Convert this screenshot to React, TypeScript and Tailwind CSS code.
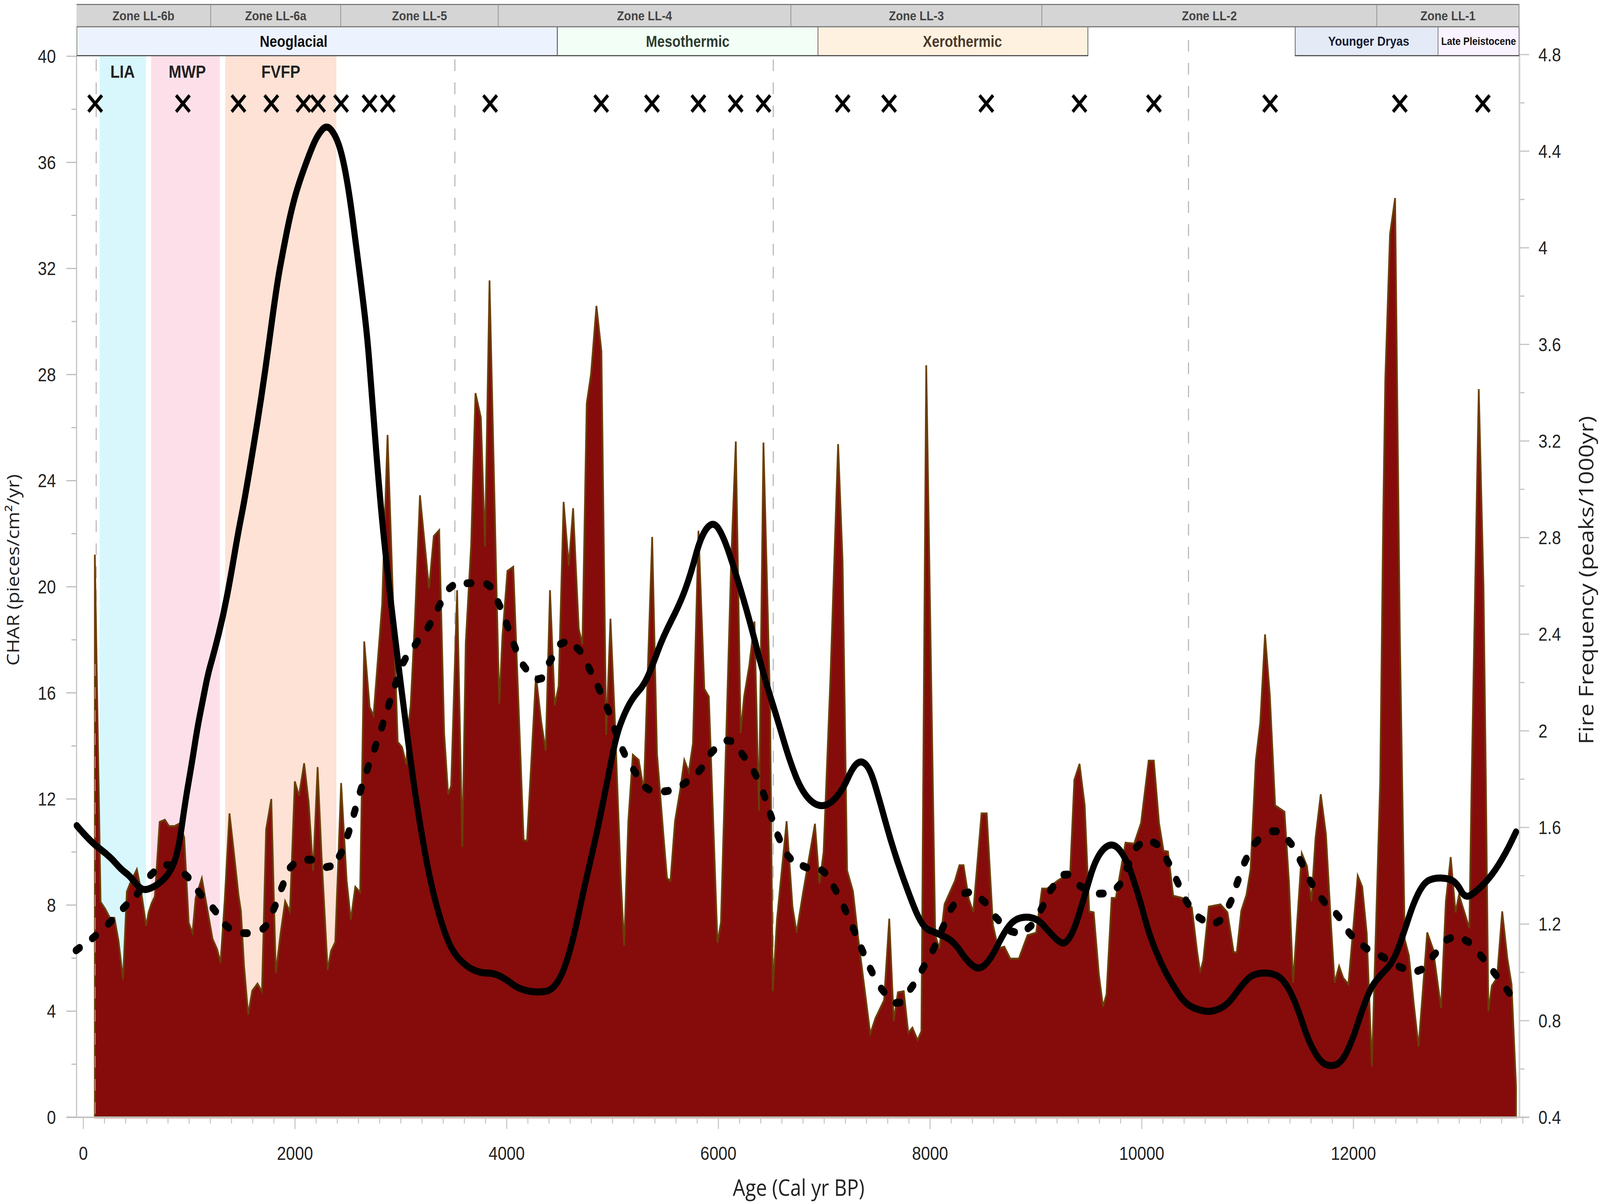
const crop = (x0: number, y0: number, w: number, h: number, pts: number[][]) =>
    pts.map(([x, y]) => [x0 + (x * w) / 1568, y0 + (y * h) / 1568])

// charcoal accumulation outline, read off in stretches, left to right
const charcoal = [
    [280, 2860],
    [280, 1420],
    ...crop(0, 1800, 1600, 1282, [
        [291, 622], [305, 645], [318, 672], [331, 672], [343, 745], [356, 865], [367, 590], [378, 560], [396, 520], [407, 580],
        [423, 697], [430, 655], [438, 628], [448, 605], [462, 372], [477, 365], [489, 385], [505, 385], [519, 377], [533, 420],
        [546, 688], [557, 720], [566, 610], [584, 548], [615, 738], [628, 770], [638, 812], [650, 620], [664, 345], [675, 450],
        [690, 600], [697, 650], [706, 820], [718, 975], [730, 900], [745, 878], [758, 903], [770, 395], [785, 300], [798, 845],
        [812, 720], [825, 620], [839, 652], [853, 245], [865, 290], [880, 188], [893, 310], [906, 525], [919, 200], [930, 470],
        [948, 835], [958, 775], [970, 748], [987, 250], [1003, 555], [1015, 678], [1028, 575], [1042, 592],
    ]),
    ...crop(900, 600, 1000, 1400, [
        [275, 1167], [300, 1355], [318, 1380], [358, 1060], [383, 575], [430, 1455], [450, 1470], [470, 1520], [478, 1420],
        [490, 1350], [510, 1100], [533, 748], [575, 1015], [597, 865], [622, 848], [645, 1430],
    ]),
    [1323, 2033], [1332, 2011],
    ...crop(900, 600, 1000, 1400, [[705, 1020]]),
    [1365, 2168],
    ...crop(900, 600, 1000, 1400, [
        [745, 1170], [770, 890], [790, 455], [815, 525], [834, 895], [855, 132], [885, 950], [900, 1345], [915, 1150], [938, 965],
        [965, 953],
    ]),
    [1546, 2150], [1556, 2153],
    ...crop(900, 600, 1000, 1400, [
        [1070, 1265], [1095, 1400], [1115, 1480], [1135, 1020], [1157, 1350], [1175, 1295], [1198, 767], [1222, 950], [1242, 785],
        [1268, 1130], [1285, 1175], [1305, 485], [1325, 400], [1350, 205], [1373, 335], [1395, 1435], [1415, 1102],
    ]),
    ...crop(1600, 1000, 1600, 2082, [
        [212, 650], [228, 940], [238, 1070], [250, 830], [263, 702], [280, 712], [295, 770], [319, 282], [333, 700], [352, 860],
        [362, 940], [372, 945], [385, 830], [400, 770], [412, 712], [425, 735], [437, 680], [453, 270], [470, 575], [483, 590],
        [508, 1065], [518, 1025], [548, 320], [561, 98], [575, 660], [585, 590], [600, 530], [615, 445], [628, 810], [641, 100],
        [660, 600], [668, 1158], [680, 1020], [708, 830], [725, 995], [737, 1045], [755, 970], [790, 835], [803, 950], [815, 890],
        [835, 550], [857, 103], [870, 330], [883, 925], [900, 965], [915, 1055], [950, 1240], [965, 1210], [990, 1175], [1005, 1018],
        [1018, 1215], [1030, 1160], [1047, 1158], [1060, 1238], [1072, 1228], [1087, 1252], [1098, 1235], [1112, -49], [1138, 1050],
        [1150, 1075], [1165, 990], [1195, 945], [1208, 915], [1220, 915], [1235, 980], [1248, 1005], [1272, 815], [1287, 815],
        [1305, 1030], [1320, 1075], [1338, 1072], [1355, 1095], [1380, 1095], [1405, 1050], [1430, 1045], [1447, 960], [1462, 960],
    ]),
    ...crop(3124, 1800, 1600, 1282, [
        [0, 555], [22, 540], [35, 530], [47, 240], [62, 190], [77, 320], [90, 652], [103, 655], [118, 850], [130, 950], [140, 912],
        [155, 610], [167, 610], [195, 437], [220, 440], [240, 375], [262, 180], [277, 180], [292, 375], [305, 462], [318, 465],
        [333, 603], [360, 610], [387, 640], [402, 775], [411, 843], [420, 805], [436, 637], [470, 630], [490, 655], [508, 780],
        [517, 780], [530, 650], [545, 600], [557, 520], [572, 180], [585, 60],
    ]),
    [3735, 1624], [3749, 1778],
    ...crop(3124, 1800, 1600, 1282, [
        [628, 320], [655, 340], [668, 560], [680, 875], [705, 470], [720, 510], [733, 620], [745, 420], [760, 285], [775, 410],
        [790, 700], [800, 875], [813, 823], [825, 860], [840, 880], [867, 540], [880, 575], [893, 720], [908, 1137],
    ]),
    [4075, 2000], [4084, 1318], [4090, 971], [4104, 599], [4119, 507], [4124, 910], [4133, 1624],
    ...crop(3124, 1800, 1600, 1282, [
        [1003, 740], [1015, 790], [1030, 950], [1043, 1075], [1068, 718], [1085, 770], [1108, 955], [1122, 620], [1136, 482],
        [1150, 655], [1160, 600], [1180, 670], [1190, 705],
    ]),
    [4345, 2000], [4356, 1471], [4366, 996], [4380, 1502], [4387, 2000],
    ...crop(3124, 1800, 1600, 1282, [
        [1245, 965], [1255, 885], [1270, 860], [1285, 652], [1300, 800], [1312, 880], [1325, 1200],
    ]),
    [4476, 2860],
]

// fire frequency
const frequency = [
    ...crop(0, 1800, 1600, 1282, [
        [222, 383], [260, 432], [318, 480], [350, 520], [375, 540], [400, 575], [420, 587], [455, 570], [490, 535], [515, 470],
    ]),
    ...crop(200, 1200, 1000, 1000, [
        [545, 1330], [575, 1180], [600, 1040], [625, 930], [650, 820], [675, 745], [720, 590], [755, 430], [790, 250], [820, 120],
    ]),
    ...crop(0, 0, 1600, 1000, [
        [760, 1568], [800, 1150], [820, 1000], [840, 860], [862, 745], [900, 600], [920, 540], [945, 500], [970, 540], [990, 620],
        [1010, 770], [1030, 980], [1050, 1200],
    ]),
    [1085, 868], [1097, 1000],
    ...crop(900, 600, 1000, 1400, [[340, 700], [370, 900], [420, 1170]]),
    ...crop(0, 1800, 1600, 1282, [
        [1190, 200], [1215, 380], [1245, 560], [1280, 700], [1310, 780], [1350, 825], [1390, 845], [1430, 845], [1465, 865],
        [1495, 890], [1530, 903], [1568, 905],
    ]),
    ...crop(1600, 1000, 1600, 2082, [
        [30, 1155], [60, 1125], [90, 1060], [120, 965], [160, 850], [190, 750], [215, 665], [240, 620], [265, 590], [295, 568],
        [320, 530], [350, 475], [400, 410], [430, 355], [460, 280], [495, 250], [525, 280], [560, 350], [600, 440], [640, 545],
        [680, 630], [715, 710], [750, 770], [790, 800], [830, 800], [870, 770], [900, 725], [925, 712], [950, 730], [975, 785],
        [1010, 870], [1050, 950], [1100, 1035], [1140, 1045], [1190, 1060], [1230, 1100], [1265, 1118], [1300, 1095], [1340, 1040],
        [1375, 1015], [1430, 1015], [1470, 1045],
    ]),
    ...crop(3124, 1800, 1600, 1282, [
        [0, 745], [20, 755], [45, 715], [75, 610], [110, 480], [155, 432], [195, 480], [230, 590], [265, 730], [300, 820],
        [330, 880], [370, 945], [420, 965], [450, 965], [490, 945], [530, 885], [565, 845], [630, 845], [665, 885], [695, 960],
        [725, 1060], [760, 1125], [790, 1138], [820, 1125], [850, 1060], [880, 960], [905, 890], [930, 855], [970, 810], [1000, 720],
        [1030, 620], [1060, 560], [1090, 547], [1130, 548], [1155, 565], [1178, 612], [1210, 590], [1255, 540], [1295, 470], [1325, 403],
    ]),
]

// smoothed charcoal background, drawn as separate dots
const background = [
    ...crop(0, 1800, 1600, 1282, [
        [225, 770], [272, 732], [318, 686], [361, 637], [401, 592], [440, 534], [488, 507], [540, 541], [578, 595], [620, 647],
        [657, 699], [710, 720], [765, 702], [794, 640], [817, 573], [844, 510], [896, 490], [950, 512], [985, 473], [1008, 407],
        [1026, 340], [1044, 271], [1064, 203],
    ]),
    ...crop(900, 600, 1000, 1400, [
        [326, 1469], [359, 1408], [390, 1346], [422, 1285], [461, 1222], [516, 1172], [575, 1122], [622, 1065], [677, 1011],
        [760, 1000], [850, 1006], [899, 1060], [937, 1121], [972, 1182], [1017, 1240], [1088, 1274], [1137, 1222], [1192, 1172],
        [1267, 1190], [1318, 1246], [1362, 1303], [1403, 1362], [1438, 1424], [1476, 1484], [1527, 1540],
    ]),
    ...crop(1600, 1000, 1600, 2082, [
        [305, 767], [360, 772], [413, 757], [458, 731], [493, 696], [541, 675], [582, 703], [617, 739], [643, 780], [663, 820],
        [685, 861], [715, 899], [761, 918], [814, 927], [848, 961], [877, 1000], [903, 1040], [927, 1079], [953, 1118], [986, 1156],
        [1030, 1180], [1070, 1150], [1103, 1113], [1134, 1075], [1160, 1035], [1187, 996], [1229, 968], [1278, 984], [1317, 1018],
        [1362, 1043], [1411, 1034], [1447, 997], [1475, 960], [1516, 933],
    ]),
    ...crop(3124, 1800, 1600, 1282, [
        [68, 575], [125, 596], [175, 572], [202, 510], [231, 447], [281, 439], [317, 495], [345, 559], [373, 623], [412, 674],
        [463, 684], [498, 625], [519, 560], [542, 493], [574, 434], [626, 401], [671, 436], [703, 497], [732, 561], [767, 618],
        [809, 665], [845, 722], [889, 765], [940, 795], [992, 827], [1046, 836], [1088, 788], [1130, 738], [1183, 745], [1226, 794],
        [1264, 847], [1302, 902],
    ]),
]

const fireEvents = [
    281, 540, 704, 801, 896, 939, 1007, 1091, 1145, 1447, 1775, 1925, 2062, 2172, 2254, 2488, 2625, 2912, 3187, 3407, 3750, 4133, 4378,
]

const periods = [
    { label: 'LIA', x: 294, width: 137, labelX: 362, fill: '#d8f7fd' },
    { label: 'MWP', x: 446, width: 203, labelX: 553, fill: '#fddfea' },
    { label: 'FVFP', x: 665, width: 328, labelX: 829, fill: '#fde2d5' },
]

const zones = [
    { label: 'Zone LL-6b', className: 'w-[397px]' },
    { label: 'Zone LL-6a', className: 'w-[384px]' },
    { label: 'Zone LL-5', className: 'w-[465px]' },
    { label: 'Zone LL-4', className: 'w-[864px]' },
    { label: 'Zone LL-3', className: 'w-[741px]' },
    { label: 'Zone LL-2', className: 'w-[989px]' },
    { label: 'Zone LL-1', className: 'w-[420px] border-r-0' },
]

const leftTicks = Array.from({ length: 21 }, (_, i) => 144 + i * 135.8)
const rightTicks = Array.from({ length: 23 }, (_, i) => 2860 - i * 123.65)
const bottomTicks = Array.from({ length: 69 }, (_, i) => 246 + i * 62.5)
const ageLabels = [0, 2000, 4000, 6000, 8000, 10000, 12000]
const rightLabels = ['0.4', '0.8', '1.2', '1.6', '2', '2.4', '2.8', '3.2', '3.6', '4', '4.4', '4.8']

function smoothPath(points: number[][]) {
    let d = `M${points[0][0]} ${points[0][1]}`
    for (let i = 1; i < points.length - 1; i++) {
        const mx = (points[i][0] + points[i + 1][0]) / 2
        const my = (points[i][1] + points[i + 1][1]) / 2
        d += `Q${points[i][0]} ${points[i][1]} ${mx} ${my}`
    }
    const last = points[points.length - 1]
    return `${d}L${last[0]} ${last[1]}`
}

function Dot({ index }: { index: number }) {
    const [x, y] = background[index]
    const prev = background[Math.max(index - 1, 0)]
    const next = background[Math.min(index + 1, background.length - 1)]
    const angle = Math.atan2(next[1] - prev[1], next[0] - prev[0])
    const dx = Math.cos(angle) * 6
    const dy = Math.sin(angle) * 6
    return <line x1={x - dx} y1={y - dy} x2={x + dx} y2={y + dy} stroke="#000" strokeWidth={20} strokeLinecap="round" />
}

export default function App() {
    return (
        <div className="h-[3082px] w-[4096px] overflow-hidden bg-white">
            {/* the window is 4096 wide, the figure is laid out at its own 4724 */}
            <div className="h-[3082px] w-[4724px] origin-top-left scale-x-[0.86707] pl-[226px] pt-[10px] font-['Liberation_Sans',sans-serif]">
                <div className="flex h-[60px] w-[4260px] border-y-[3px] border-[#7d7d7d] bg-[#d5d5d5] text-[34px] font-bold text-[#444]">
                    {zones.map((zone) => (
                        <div key={zone.label} className={`flex items-center justify-center border-r-2 border-[#8c8c8c] ${zone.className}`}>
                            {zone.label}
                        </div>
                    ))}
                </div>

                <div className="flex h-[74px] w-[4260px] text-[40px] font-bold">
                    <div className="flex w-[1421px] items-center justify-center border-b-[3px] border-l-2 border-r-[3px] border-b-[#555] border-l-[#777] border-r-[#5c6a6a] bg-[#edf3fe] pr-[138px] text-[#111]">
                        Neoglacial
                    </div>
                    <div className="flex w-[767px] items-center justify-center border-b-[3px] border-b-[#555] bg-[#f3fff6] text-[#2d3d30]">
                        Mesothermic
                    </div>
                    <div className="flex w-[799px] items-center justify-center border-b-[3px] border-l-2 border-r-2 border-[#555] bg-[#fff1e0] pl-[56px] text-[#4a3b2c]">
                        Xerothermic
                    </div>
                    <div className="w-[610px]" />
                    <div className="flex w-[424px] items-center justify-center border-b-[3px] border-l-2 border-r-2 border-[#555] bg-[#e4eaf6] pl-[12px] text-[34px] text-[#141c33]">
                        Younger Dryas
                    </div>
                    <div className="flex w-[239px] items-center justify-center border-b-[3px] border-r-2 border-[#555] bg-[#f9f2ff] text-[28px] text-[#111]">
                        Late Pleistocene
                    </div>
                </div>

                <svg viewBox="0 144 4724 2938" className="-ml-[226px] block h-[2938px] w-[4724px] overflow-visible">
                    {periods.map((period) => (
                        <g key={period.label}>
                            <rect x={period.x} y={144} width={period.width} height={2716} fill={period.fill} />
                            <text x={period.labelX} y={199} textAnchor="middle" className="fill-[#222] text-[45px] font-bold">
                                {period.label}
                            </text>
                        </g>
                    ))}

                    {[
                        [284, 152],
                        [1343, 152],
                        [2283, 152],
                        [3509, 102],
                    ].map(([x, y]) => (
                        <line key={x} x1={x} y1={y} x2={x} y2={2860} stroke="#b4b4b4" strokeWidth={3} strokeDasharray="30 29" />
                    ))}

                    <polygon points={charcoal.map((p) => p.join(',')).join(' ')} fill="#850c0b" stroke="#6b3f08" strokeWidth={5} strokeLinejoin="miter" />
                    <line x1={281} y1={1700} x2={281} y2={2860} stroke="#c58080" strokeWidth={3} strokeDasharray="30 29" />

                    <line x1={226} y1={144} x2={226} y2={2860} stroke="#bdbdbd" strokeWidth={3} />
                    <line x1={4486} y1={144} x2={4486} y2={2860} stroke="#d0d0d0" strokeWidth={5} />
                    <line x1={196} y1={2860} x2={4515} y2={2860} stroke="#c4c4c4" strokeWidth={4} />

                    {leftTicks.map((y, i) => (
                        <line key={y} x1={i % 2 === 0 ? 196 : 211} y1={y} x2={226} y2={y} stroke="#bdbdbd" strokeWidth={3} />
                    ))}
                    {rightTicks.map((y, i) => (
                        <line key={y} x1={4486} y1={y} x2={i % 2 === 0 ? 4515 : 4501} y2={y} stroke="#c4c4c4" strokeWidth={3} />
                    ))}
                    {bottomTicks.map((x, i) => (
                        <line key={x} x1={x} y1={2860} x2={x} y2={i % 10 === 0 ? 2890 : 2876} stroke="#c4c4c4" strokeWidth={3} />
                    ))}

                    <path d={smoothPath(frequency)} fill="none" stroke="#000" strokeWidth={18} strokeLinecap="round" strokeLinejoin="round" />
                    {background.map((_, i) => (
                        <Dot key={i} index={i} />
                    ))}

                    {fireEvents.map((x) => (
                        <path key={x} d={`M${x - 20} 244L${x + 20} 286M${x + 20} 244L${x - 20} 286`} stroke="#000" strokeWidth={9} fill="none" />
                    ))}

                    <g className="fill-[#222] text-[48px]">
                        {leftTicks
                            .filter((_, i) => i % 2 === 0)
                            .map((y, i) => (
                                <text key={y} x={165} y={y + 17} textAnchor="end">
                                    {40 - i * 4}
                                </text>
                            ))}
                        {rightLabels.map((label, i) => (
                            <text key={label} x={4542} y={2860 - i * 247.3 + 17}>
                                {label}
                            </text>
                        ))}
                        {ageLabels.map((age) => (
                            <text key={age} x={246 + age * 0.3125} y={2969} textAnchor="middle">
                                {age}
                            </text>
                        ))}
                    </g>

                    <g className="fill-[#222] font-['Open_Sans',sans-serif]">
                        <text x={2358} y={3061} textAnchor="middle" className="text-[58px]">
                            Age (Cal yr BP)
                        </text>
                        <text transform="translate(57 1459) rotate(-90)" textAnchor="middle" className="text-[50px]">
                            CHAR (pieces/cm²/yr)
                        </text>
                        <text transform="translate(4704 1485) rotate(-90)" textAnchor="middle" className="text-[60px]">
                            Fire Frequency (peaks/1000yr)
                        </text>
                    </g>
                </svg>
            </div>
        </div>
    )
}
